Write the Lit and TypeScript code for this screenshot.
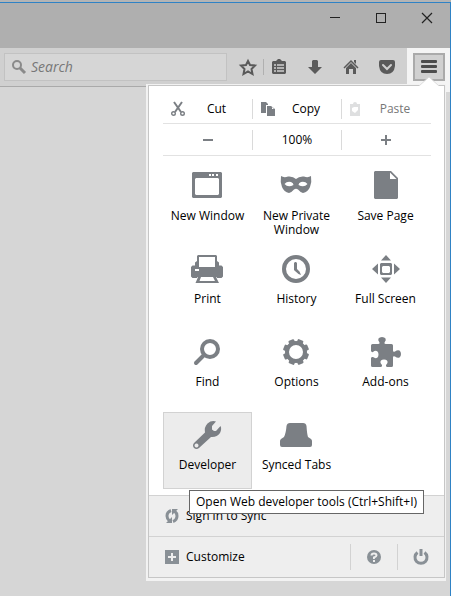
import { LitElement, html, svg, css, SVGTemplateResult } from "lit";
import { customElement, property } from "lit/decorators.js";

interface Tile {
  label: string;
  icon: SVGTemplateResult;
  active?: boolean;
}

const gearTeeth = [22, 67, 112, 157, 202, 247, 292, 337];

const tiles: Tile[] = [
  {
    label: "New Window",
    icon: svg`<path fill-rule="evenodd" d="M1 0H29L30 1V25L29 26H1L0 25V1ZM4 6L3 7V22L4 23H26L27 22V7L26 6ZM17 2V4H19V2ZM20 2V4H22V2ZM24 2V4H26V2Z"/>`,
  },
  {
    label: "New Private Window",
    icon: svg`<path fill-rule="evenodd" d="M0 4Q3 6 7 4.500Q12 4 15 7Q18 4 23 4.500Q27 6 30 4Q31 10 29 15Q27 20 22 21Q19 20 17 17.500Q15 16 13 17.500Q11 20 8 21Q3 20 1 15Q-1 10 0 4ZM3.500 12Q6 9 10 10Q12.500 11 12.500 13Q7 16 3.500 12ZM26.500 12Q24 9 20 10Q17.500 11 17.500 13Q23 16 26.500 12Z"/>`,
  },
  {
    label: "Save Page",
    icon: svg`<path fill-rule="evenodd" d="M5 -1H21L28 6V26L27 27H5L4 26V0ZM20 0.500V7H26.500Z"/>`,
  },
  {
    label: "Print",
    icon: svg`<path fill-rule="evenodd" d="M6 0H24L25 1V6L27 7.500V10.500H29.500L31 12V21.500L29.500 23H25L24.500 22H5.500L5 23H0.500L-1 21.500V12L0.500 10.500H3V7.500L5 6V1ZM7 2V12H23V2ZM3 14V16H7V14Z"/><path fill-rule="evenodd" d="M6.500 21H23.500L27 28H3.500ZM9 22L7.500 26H23L21 22Z"/>`,
  },
  {
    label: "History",
    icon: svg`<circle class="line" cx="15" cy="14" r="12" stroke-width="4"/><path d="M13 8L14 7H15L16 8V14L18.500 16.500L20 20L17.500 19L14 16L13 15Z"/>`,
  },
  {
    label: "Full Screen",
    icon: svg`<path fill-rule="evenodd" d="M11 5.500L16 0L21 5.500ZM11 22.500L16 28L21 22.500ZM8 8.500L2 14L8 19.500ZM24 8.500L30 14L24 19.500ZM11 8H21L22 9V19L21 20H11L10 19V9ZM13 11L12 12V17L13 18H19L20 17V12L19 11Z"/>`,
  },
  {
    label: "Find",
    icon: svg`<circle class="line" cx="18" cy="11" r="8" stroke-width="4"/><path class="line round" stroke-width="4" d="M12 17L4 25"/>`,
  },
  {
    label: "Options",
    icon: svg`<circle class="line" cx="15" cy="14" r="9" stroke-width="4"/>${gearTeeth.map(
      (a) => svg`<rect x="12" y="1" width="6" height="5" rx="1" transform="rotate(${a} 15 14)"/>`
    )}`,
  },
  {
    label: "Add-ons",
    icon: svg`<path d="M1 7.500Q1 6 2.500 6H8Q10 6 9.500 4.500Q7.500 2 8.500 0.500Q9.500 -1 12 -1Q14.500 -1 15.500 0.500Q16.500 2 14.500 4.500Q14 6 16 6H21.500Q23 6 23 7.500V12.500Q23 14.500 25 13.500Q27.500 11.500 29.500 12.500Q31 13.500 31 16Q31 18.500 29.500 19.500Q27.500 20.500 25 18.500Q23 17.500 23 19.500V27.500Q23 29 21.500 29H17Q15.500 28.500 16 27Q18.500 24.500 17 22.500Q16 21.500 14 21.500Q12 21.500 11 22.500Q9.500 24.500 12 27Q12.500 28.500 11 29H2.500Q1 29 1 27.500V20Q1.500 18.500 3 19Q5.500 21 7.500 19.500Q8.500 18.500 8.500 16.500Q8.500 14.500 7.500 13.500Q5.500 12 3 14Q1.500 14.500 1 13Z"/>`,
  },
  {
    label: "Developer",
    active: true,
    icon: svg`<path fill-rule="evenodd" d="M24 0.500L20 5V8.500L22 10H24L28.500 5Q30 8 28 12Q25 16.500 19 16L7 27Q4.500 29 2 27Q0 24.500 2 22L13 11.500Q12 6 15.500 2.500Q19.500 -1 24 0.500ZM4.500 22.500A2 2 0 1 0 4.510 22.500Z"/>`,
  },
  {
    label: "Synced Tabs",
    icon: svg`<path d="M9 2H22Q25 2 25.500 5Q26 13 27 16L30 18Q31 19 31 20V24Q31 26 29 26H1Q-1 26 -1 24V20Q-1 19 0 18L3 16Q5 12 5.500 5Q6 2 9 2Z"/>`,
  },
];

@customElement("tool-icon")
class ToolIcon extends LitElement {
  @property({ type: Number }) w = 16;
  @property({ type: Number }) h = 16;
  @property({ attribute: false }) shape?: SVGTemplateResult;
  static styles = css`
    :host { display: block; flex: none; }
    svg { display: block; overflow: visible; fill: currentColor; }
    .line { fill: none; stroke: currentColor; }
    .round { stroke-linecap: round; }
    .light { fill: #eeeeee; }
    .light-line { fill: none; stroke: #eeeeee; stroke-width: 2; }
    .tray-line { fill: none; stroke: #d0d0d0; stroke-width: 2; }
    .thin { stroke-width: 1.5; }
  `;
  render() {
    return html`<svg aria-hidden="true" width=${this.w} height=${this.h} viewBox="0 0 ${this.w} ${this.h}">${this.shape}</svg>`;
  }
}

const icon = (w: number, h: number, shape: SVGTemplateResult) =>
  html`<tool-icon .w=${w} .h=${h} .shape=${shape}></tool-icon>`;

@customElement("app-menu")
class AppMenu extends LitElement {
  static styles = css`
    :host {
      display: block;
      box-sizing: border-box;
      padding: 1px 1px 3px 2px;
      background: #f2f2f2;
      color: #000;
      font: 12px/14px "Open Sans", "Noto Sans", sans-serif;
    }
    * { box-sizing: border-box; }
    button {
      margin: 0;
      padding: 0;
      border: 0;
      background: none;
      color: inherit;
      font: inherit;
    }
    .panel { border: 1px solid #c6c6c6; background: #fff; position: relative; }
    .arrow { position: absolute; top: -10px; right: 5px; }
    .body { padding: 8px 13px 6px 14px; }
    .row {
      display: grid;
      grid-template-columns: repeat(3, 1fr);
      align-items: center;
      height: 30px;
      padding-right: 1px;
      border-bottom: 1px solid #e2e2e2;
    }
    .row.zoom { height: 32px; }
    .row button {
      display: flex;
      align-items: center;
      height: 20px;
      padding: 0 4px 0 8px;
    }
    .row button + button { border-left: 1px solid #dadada; }
    .row span { flex: 1; text-align: center; }
    .row.zoom button { justify-content: center; padding: 0; }
    .row tool-icon, .tile tool-icon { color: #7b7f84; }
    .row button:disabled { color: #777; }
    .row button:disabled tool-icon { color: #dedfe0; }
    .tiles {
      display: grid;
      grid-template-columns: repeat(3, 1fr);
      row-gap: 6px;
      padding: 7px 1px 0 0;
    }
    .tile {
      display: flex;
      flex-direction: column;
      align-items: center;
      gap: 9px;
      height: 77px;
      padding-top: 8px;
      border: 1px solid transparent;
    }
    .tile.active { background: #ececec; border-color: #d2d2d2; }
    .tile span { max-width: 80px; }
    .footer {
      display: flex;
      align-items: center;
      height: 41px;
      background: #eee;
      border-top: 1px solid #d2d2d2;
    }
    .footer tool-icon { color: #899096; }
    .wide {
      flex: 1;
      display: flex;
      align-items: center;
      gap: 7px;
      padding-left: 16px;
    }
    .small {
      width: 47px;
      height: 26px;
      display: flex;
      align-items: center;
      justify-content: center;
      border-left: 1px solid #d2d2d2;
    }
    .tip {
      position: absolute;
      left: 40px;
      top: 404px;
      padding: 4px 6px;
      border: 1px solid #666;
      background: #fff;
      white-space: nowrap;
    }
  `;
  render() {
    return html`
      <div class="panel">
        <svg class="arrow" width="20" height="11" viewBox="0 0 20 11" aria-hidden="true">
          <path d="M0 11V10L10 1L20 10V11Z" fill="#fff" />
          <path d="M0 10L10 1L20 10" fill="none" stroke="#dcdcdc" />
        </svg>
        <div class="body">
          <div class="row">
            <button>${icon(14, 14, svg`<path class="line" stroke-width="2" d="M3 0L10 10M11 0L4 10"/><circle class="line" cx="2.500" cy="11.500" r="1.800" stroke-width="1.400"/><circle class="line" cx="11.500" cy="11.500" r="1.800" stroke-width="1.400"/>`)}<span>Cut</span></button>
            <button>${icon(14, 14, svg`<path d="M0 0H5L7 2V3H5V11H0ZM6 4H10L14 7V14H6Z"/><path fill="#fff" d="M11 5V7H13Z"/>`)}<span>Copy</span></button>
            <button disabled>${icon(14, 14, svg`<path d="M0 2H3Q3 0 5 0Q7 0 7 2H10V14H0Z"/><path fill="#fff" d="M2 6L4 5H8V8L5 11L2 9Z"/>`)}<span>Paste</span></button>
          </div>
          <div class="row zoom">
            <button aria-label="Zoom out">${icon(10, 10, svg`<path d="M0 4H10V6H0Z"/>`)}</button>
            <button>100%</button>
            <button aria-label="Zoom in">${icon(10, 10, svg`<path d="M0 4H4V0H6V4H10V6H6V10H4V6H0Z"/>`)}</button>
          </div>
          <div class="tiles">
            ${tiles.map((t) => html`<button class="tile ${t.active ? "active" : ""}">${icon(31, 28, t.icon)}<span>${t.label}</span></button>`)}
          </div>
        </div>
        <div class="footer">
          <button class="wide">${icon(14, 14, svg`<path class="line" stroke-width="3" d="M6 1.500Q2 3 2 7Q2 10 4.500 12M8 12.500Q12 11 12 7Q12 4 9.500 2"/><path d="M1 14H7V8ZM13 0H7V6Z"/>`)}Sign in to Sync</button>
        </div>
        <div class="footer">
          <button class="wide">${icon(14, 14, svg`<rect width="14" height="14"/><path class="light" d="M3 6H6V3H8V6H11V8H8V11H6V8H3Z"/>`)}Customize</button>
          <button class="small" aria-label="Help">${icon(14, 14, svg`<circle cx="7" cy="7" r="7"/><path class="light-line" d="M4.500 5.500Q4.500 3.500 7 3.500Q9.500 3.500 9.500 5.500Q9.500 6.500 7 7.500V9"/><rect class="light" x="6" y="10" width="2" height="2"/>`)}</button>
          <button class="small" aria-label="Exit">${icon(14, 14, svg`<path class="line" stroke-width="3" d="M3.500 2.500A6 6 0 1 0 10.500 2.500"/><rect x="5.500" y="-1" width="3" height="7"/>`)}</button>
        </div>
        <div class="tip" role="tooltip">Open Web developer tools (Ctrl+Shift+I)</div>
      </div>
    `;
  }
}

@customElement("app-root")
class AppRoot extends LitElement {
  static styles = css`
    :host {
      display: block;
      box-sizing: border-box;
      min-height: 100vh;
      padding-top: 2px;
      background: #b4b4b4;
      font: 12px/14px "Open Sans", "Noto Sans", sans-serif;
    }
    * { box-sizing: border-box; }
    button {
      display: flex;
      align-items: center;
      justify-content: center;
      flex: none;
      margin: 0;
      padding: 0;
      border: 0;
      background: none;
      color: #5a5a5a;
    }
    .window {
      position: relative;
      min-height: calc(100vh - 2px);
      border: solid #2f82c5;
      border-width: 1px 1px 0 0;
      background: #d6d6d6;
    }
    .title {
      display: flex;
      justify-content: flex-end;
      height: 45px;
      background: #afafaf;
    }
    .title button { width: 46px; height: 30px; color: #222; }
    .toolbar {
      display: flex;
      align-items: center;
      height: 39px;
      padding-left: 4px;
      background: #d0d0d0;
      border-bottom: 1px solid #aaa;
    }
    .search {
      flex: 1;
      display: flex;
      align-items: center;
      gap: 5px;
      height: 28px;
      padding-left: 7px;
      margin-right: 6px;
      border: 1px solid #c2c2c2;
      background: #d6d6d6;
      color: #8a8a8a;
    }
    input {
      flex: 1;
      min-width: 0;
      padding: 0;
      border: 0;
      outline: 0;
      background: none;
      font: italic 14px/20px "Open Sans", "Noto Sans", sans-serif;
    }
    input::placeholder { color: #777; opacity: 1; }
    .tool { width: 36px; height: 28px; }
    .tool.first { width: 30px; }
    .divider { flex: none; width: 1px; height: 16px; background: #b0b0b0; margin-right: -3px; }
    .spot {
      flex: none;
      align-self: stretch;
      display: flex;
      align-items: center;
      width: 43px;
      height: 44px;
      margin-left: 2px;
      padding: 0 0 6px 6px;
      background: #f4f4f4;
    }
    .menu {
      width: 32px;
      height: 28px;
      border: 2px solid #aaa;
      background: #d0d0d0;
      color: #4c4c4c;
    }
    app-menu { position: absolute; top: 81px; right: 4px; width: 300px; }
  `;
  render() {
    return html`
      <div class="window">
        <div class="title">
          <button aria-label="Minimize">${icon(10, 10, svg`<path d="M0 4H10V5H0Z"/>`)}</button>
          <button aria-label="Maximize">${icon(10, 10, svg`<path fill-rule="evenodd" d="M0 0H10V10H0ZM1 1V9H9V1Z"/>`)}</button>
          <button aria-label="Close">${icon(10, 10, svg`<path class="line" stroke-width="1.200" d="M0 0L10 10M10 0L0 10"/>`)}</button>
        </div>
        <div class="toolbar">
          <label class="search">
            ${icon(14, 14, svg`<circle class="line" cx="5" cy="5" r="4" stroke-width="2"/><path class="line" stroke-width="3" d="M8 8L13 13"/>`)}
            <input type="text" placeholder="Search" aria-label="Search" />
          </label>
          <button class="tool first" aria-label="Bookmark">${icon(16, 16, svg`<path class="line" stroke-width="2" d="M8 2L10 6L15 6.500L11.500 10L12.500 15L8 12.500L3.500 15L4.500 10L1 6.500L6 6Z"/>`)}</button>
          <span class="divider"></span>
          <button class="tool" aria-label="Bookmarks list">${icon(14, 14, svg`<path d="M1 1H4L6 -1H8L10 1H13L14 2V13L13 14H1L0 13V2Z"/><path class="tray-line thin" d="M2 5H4M5 5H12M2 8H4M5 8H12M2 11H4M5 11H12"/>`)}</button>
          <button class="tool" aria-label="Downloads">${icon(14, 14, svg`<path d="M4 1L5 0H9L10 1V7H14L7 14L0 7H4Z"/>`)}</button>
          <button class="tool" aria-label="Home">${icon(14, 14, svg`<path class="line" stroke-width="1.500" d="M0 8L7 1L14 8"/><path d="M7 3L12 8V14H9V9H5V14H2V8ZM10 0H12V4L10 2Z"/>`)}</button>
          <button class="tool" aria-label="Pocket">${icon(16, 14, svg`<path d="M2 0H14Q16 0 16 2V6Q15 14 8 14Q1 14 0 6V2Q0 0 2 0Z"/><path class="tray-line round" d="M4 5L8 9L12 5"/>`)}</button>
          <div class="spot">
            <button class="menu" aria-label="Open menu">${icon(16, 14, svg`<rect y="0" width="16" height="3" rx="1"/><rect y="5" width="16" height="3" rx="1"/><rect y="10" width="16" height="3" rx="1"/>`)}</button>
          </div>
        </div>
        <app-menu></app-menu>
      </div>
    `;
  }
}
